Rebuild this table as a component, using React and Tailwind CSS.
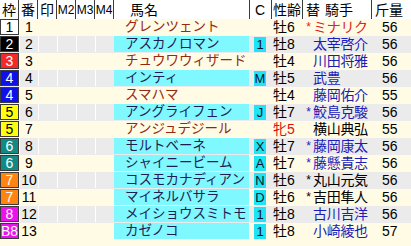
import React from 'react';

const WAKU = {
  1: 'bg-white text-black',
  2: 'bg-black text-white',
  3: 'bg-[#f42a2a] text-white',
  4: 'bg-[#1010e8] text-white',
  5: 'bg-[#ffff10] text-black',
  6: 'bg-[#128a84] text-white',
  7: 'bg-[#ff8410] text-white',
  8: 'bg-[#ee10ee] text-white',
};

const horses = [
  { waku: 1, wl: '1', no: 1, name: 'グレンツェント', cyan: false, c: '', sex: '牡6', mare: false, mark: '*', jockey: 'ミナリク', jc: 'red', kg: 56 },
  { waku: 2, wl: '2', no: 2, name: 'アスカノロマン', cyan: true, c: '1', sex: '牡8', mare: false, mark: '', jockey: '太宰啓介', jc: 'blue', kg: 56 },
  { waku: 3, wl: '3', no: 3, name: 'チュウワウィザード', cyan: false, c: '', sex: '牡4', mare: false, mark: '', jockey: '川田将雅', jc: 'blue', kg: 56 },
  { waku: 4, wl: '4', no: 4, name: 'インティ', cyan: true, c: 'M', sex: '牡5', mare: false, mark: '', jockey: '武豊', jc: 'blue', kg: 56 },
  { waku: 4, wl: '4', no: 5, name: 'スマハマ', cyan: false, c: '', sex: '牡4', mare: false, mark: '', jockey: '藤岡佑介', jc: 'blue', kg: 55 },
  { waku: 5, wl: '5', no: 6, name: 'アングライフェン', cyan: true, c: 'J', sex: '牡7', mare: false, mark: '*', jockey: '鮫島克駿', jc: 'blue', kg: 56 },
  { waku: 5, wl: '5', no: 7, name: 'アンジュデジール', cyan: false, c: '', sex: '牝5', mare: true, mark: '', jockey: '横山典弘', jc: 'black', kg: 55 },
  { waku: 6, wl: '6', no: 8, name: 'モルトベーネ', cyan: true, c: 'X', sex: '牡7', mare: false, mark: '*', jockey: '藤岡康太', jc: 'blue', kg: 56 },
  { waku: 6, wl: '6', no: 9, name: 'シャイニービーム', cyan: true, c: 'A', sex: '牡7', mare: false, mark: '*', jockey: '藤懸貴志', jc: 'blue', kg: 56 },
  { waku: 7, wl: '7', no: 10, name: 'コスモカナディアン', cyan: true, c: 'N', sex: '牡6', mare: false, mark: '*', jockey: '丸山元気', jc: 'black', kg: 56 },
  { waku: 7, wl: '7', no: 11, name: 'マイネルバサラ', cyan: true, c: 'D', sex: '牡6', mare: false, mark: '*', jockey: '吉田隼人', jc: 'black', kg: 56 },
  { waku: 8, wl: '8', no: 12, name: 'メイショウスミトモ', cyan: true, c: '1', sex: '牡8', mare: false, mark: '', jockey: '古川吉洋', jc: 'blue', kg: 56 },
  { waku: 8, wl: 'B8', no: 13, name: 'カゼノコ', cyan: true, c: '1', sex: '牡8', mare: false, mark: '', jockey: '小崎綾也', jc: 'blue', kg: 57 },
];

const JOCKEY = {
  red: 'text-[#e02424]',
  blue: 'text-[#1c1cb8]',
  black: 'text-black',
};

// 半角はLiberation、全角はNoto CJKに落ちる
const font = { fontFamily: '"Liberation Sans", "Noto Sans CJK JP", sans-serif' };

function Head({ w, children, className = '' }) {
  return (
    <div className={`${w} h-full flex items-center border-r border-[#3c3c3c] ${className}`}>
      {children}
    </div>
  );
}

function Row({ h, index }) {
  const gray = index % 2 === 1;
  const rowBg = gray ? 'bg-[#ebebeb]' : 'bg-[#fffbe4]';
  const sep = gray ? 'border-white' : 'border-transparent';

  return (
    <div className={`flex h-[17px] leading-[14px] ${rowBg}`}>
      <div className="w-[19px] h-[16px] shrink-0">
        <div className={`h-full flex items-center justify-center border border-[#3a3a3a] text-[14px] leading-[13px] ${WAKU[h.waku]}`}>
          {h.wl}
        </div>
      </div>
      <div className={`w-[19px] h-[16px] shrink-0 flex items-center justify-center border-l ${sep} text-[14px]`}>{h.no}</div>
      <div className={`w-[19px] h-[16px] shrink-0 border-l ${sep}`} />
      <div className={`w-[19px] h-[16px] shrink-0 border-l ${sep}`} />
      <div className={`w-[19px] h-[16px] shrink-0 border-l ${sep}`} />
      <div className={`w-[19px] h-[16px] shrink-0 border-l ${sep}`} />
      <div className="w-[136px] h-[16px] shrink-0 pr-[1px]">
        <div
          className={`h-full flex items-center pl-[11px] text-[13.5px] whitespace-nowrap ${
            h.cyan ? 'bg-[#80f8ff] text-[#1e1e52]' : 'text-[#962812]'
          }`}
        >
          {h.name}
        </div>
      </div>
      <div className="w-[22px] h-[16px] shrink-0 flex items-center pl-[4px]">
        {h.c && (
          <div className="w-[12px] h-[15px] bg-[#1ee4f4] flex items-center justify-center text-[13px] leading-[13px] text-[#101030]">
            {h.c}
          </div>
        )}
      </div>
      <div className={`w-[31px] h-[16px] shrink-0 flex items-center pl-[1px] text-[14px] ${h.mare ? 'text-[#e01010]' : 'text-black'}`}>
        {h.sex}
      </div>
      <div className="w-[69px] h-[16px] shrink-0 flex items-center text-[14px] whitespace-nowrap">
        <span className={`w-[10px] text-right pr-[2px] text-[12px] ${JOCKEY[h.jc]}`}>{h.mark}</span>
        <span className={`tracking-[-0.3px] ${JOCKEY[h.jc]}`}>{h.jockey}</span>
      </div>
      <div className="flex-1 h-[16px] flex items-center pl-[10px] text-[14px] text-black">{h.kg}</div>
    </div>
  );
}

export default function App() {
  return (
    <div className="w-[411px] h-[246px] bg-[#fffbe4] overflow-hidden text-black" style={font}>
      <div className="flex h-[19px] bg-white text-[14px] leading-none">
        <Head w="w-[19px]" className="justify-center">枠</Head>
        <Head w="w-[19px]" className="justify-center">番</Head>
        <Head w="w-[19px]" className="justify-center">印</Head>
        <Head w="w-[19px]" className="justify-center text-[12px]">M2</Head>
        <Head w="w-[19px]" className="justify-center text-[12px]">M3</Head>
        <Head w="w-[19px]" className="justify-center text-[12px]">M4</Head>
        <Head w="w-[136px]" className="pl-[16px]">馬名</Head>
        <Head w="w-[22px]" className="pl-[5px]">C</Head>
        <Head w="w-[31px]" className="pl-[1px]">性齢</Head>
        <Head w="w-[69px]" className="pl-[3px] gap-[5px]">
          <span>替</span>
          <span>騎手</span>
        </Head>
        <div className="flex-1 h-full flex items-center pl-[3px]">斤量</div>
      </div>
      {horses.map((h, i) => (
        <Row key={h.no} h={h} index={i} />
      ))}
    </div>
  );
}
